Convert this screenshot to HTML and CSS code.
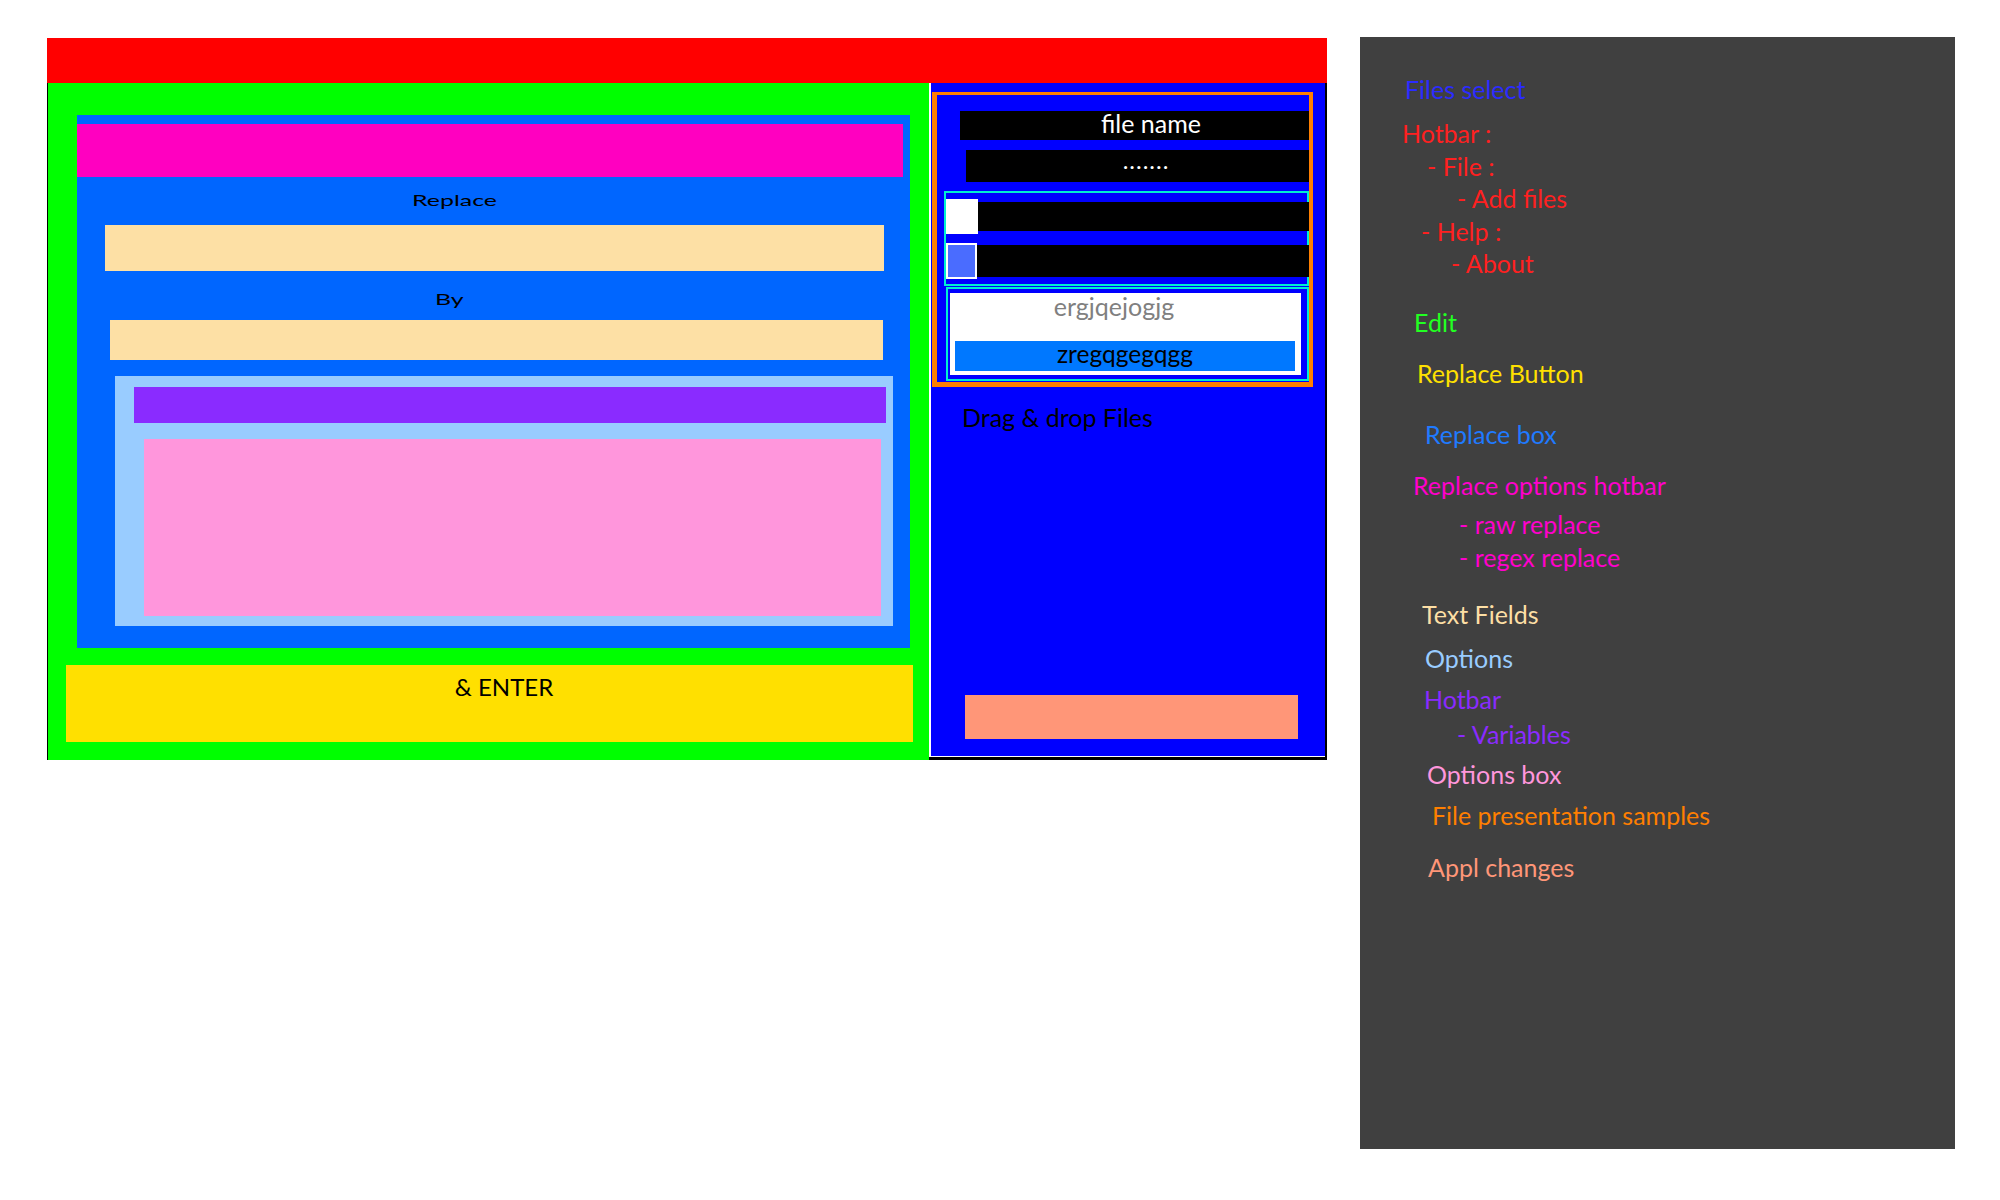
FILE: index.html
```html
<!DOCTYPE html>
<html lang="en">
<head>
<meta charset="utf-8">
<title>Mass Replace – layout mockup</title>
<link rel="stylesheet" href="styles.css">
</head>
<body>
<div class="page">
  <div class="app">
    <div class="menubar"></div>
    <div class="main">
      <section class="edit">
        <div class="replace-box">
          <div class="mode-bar"></div>
          <div class="field-label label-replace"><span>Replace</span></div>
          <div class="field field-find"></div>
          <div class="field-label label-by"><span>By</span></div>
          <div class="field field-by"></div>
          <div class="options">
            <div class="var-bar"></div>
            <div class="options-body"></div>
          </div>
        </div>
        <div class="enter-btn">&amp; ENTER</div>
      </section>
      <aside class="files">
        <div class="samples">
          <div class="bar bar-name">file name</div>
          <div class="bar bar-dots">.......</div>
          <div class="checks">
            <div class="check-row"><span class="box box-off"></span><span class="bar check-bar"></span></div>
            <div class="check-row"><span class="box box-on"></span><span class="bar check-bar check-bar-2"></span></div>
          </div>
          <div class="preview">
            <div class="preview-inner">
              <div class="preview-old">ergjqejogjg</div>
              <div class="preview-new">zregqgegqgg</div>
            </div>
          </div>
        </div>
        <div class="drop-hint">Drag &amp; drop Files</div>
        <div class="apply-btn"></div>
      </aside>
    </div>
  </div>
  <div class="legend">
    <p class="lg lg-files">Files select</p>
    <p class="lg c-menu lg-hotbar">Hotbar :</p>
    <p class="lg c-menu lg-file">- File :</p>
    <p class="lg c-menu lg-addfiles">- Add files</p>
    <p class="lg c-menu lg-help">- Help :</p>
    <p class="lg c-menu lg-about">- About</p>
    <p class="lg lg-edit">Edit</p>
    <p class="lg lg-button">Replace Button</p>
    <p class="lg lg-rbox">Replace box</p>
    <p class="lg c-mode lg-rhot">Replace options hotbar</p>
    <p class="lg c-mode lg-raw">- raw replace</p>
    <p class="lg c-mode lg-regex">- regex replace</p>
    <p class="lg lg-fields">Text Fields</p>
    <p class="lg lg-options">Options</p>
    <p class="lg c-vars lg-vhot">Hotbar</p>
    <p class="lg c-vars lg-vars">- Variables</p>
    <p class="lg lg-obox">Options box</p>
    <p class="lg lg-samples">File presentation samples</p>
    <p class="lg lg-apply">Appl changes</p>
  </div>
</div>
</body>
</html>
```

FILE: styles.css
```css
* { box-sizing: border-box; }

html, body {
  margin: 0;
  padding: 0;
  background: #ffffff;
}

body {
  font-family: Lato, "Open Sans", sans-serif;
  width: 2000px;
  height: 1200px;
  overflow: hidden;
}

.page {
  display: flex;
  align-items: flex-start;
  padding: 37px 0 0 47px;
}

/* ---------- application mockup ---------- */
.app {
  width: 1280px;
  margin-top: 1px;
}

.menubar {
  height: 45px;
  background: #ff0000;
}

.main {
  display: flex;
  height: 677px;
}

/* left: edit area */
.edit {
  width: 882px;
  background: #00ff00;
  border-left: 1px solid #000;
  display: flex;
  flex-direction: column;
}

.replace-box {
  margin: 32px 0 0 29px;
  width: 833px;
  height: 533px;
  background: #0066ff;
  padding-top: 9px;
  display: flex;
  flex-direction: column;
}

.mode-bar {
  width: 826px;
  height: 53px;
  background: #ff00c0;
  flex: none;
}

.field-label {
  flex: none;
  height: 48px;
  padding: 13px 0 0 335px;
  font-size: 15px;
  line-height: 20px;
  color: #000;
}

.field-label span {
  display: inline-block;
  transform: scaleX(1.66);
  transform-origin: left center;
}

.label-by {
  height: 49px;
  padding: 18px 0 0 358px;
}

.field {
  flex: none;
  background: #fde0a5;
}

.field-find {
  margin-left: 28px;
  width: 779px;
  height: 46px;
}

.field-by {
  margin-left: 33px;
  width: 773px;
  height: 40px;
}

.options {
  flex: none;
  margin: 16px 0 0 38px;
  width: 778px;
  height: 250px;
  background: #99ccff;
  padding-top: 11px;
}

.var-bar {
  margin-left: 19px;
  width: 752px;
  height: 36px;
  background: #8a2bff;
}

.options-body {
  margin: 16px 0 0 29px;
  width: 737px;
  height: 177px;
  background: #ff96dc;
}

.enter-btn {
  margin: 17px 0 0 18px;
  width: 847px;
  height: 77px;
  background: #ffe000;
  padding: 7px 0 0 29px;
  text-align: center;
  font-size: 24px;
  line-height: 30px;
  color: #000;
}

/* right: files area */
.files {
  width: 398px;
  background: #0000ff;
  border-right: 2px solid #000;
  border-bottom: 3px solid #000;
  box-shadow: inset 2px -1px 0 #ffffff;
  display: flex;
  flex-direction: column;
}

.samples {
  flex: none;
  margin: 9px 0 0 3px;
  width: 381px;
  height: 295px;
  border-style: solid;
  border-color: #ff7f00;
  border-width: 3px 4px 5px 5px;
}

.bar {
  background: #000;
  color: #fff;
}

.bar-name {
  margin: 16px 0 0 23px;
  height: 29px;
  padding-left: 33px;
  font-size: 25px;
  line-height: 24px;
  text-align: center;
}

.bar-dots {
  margin: 10px 0 0 29px;
  height: 32px;
  padding-left: 17px;
  font-size: 24px;
  line-height: 19px;
  letter-spacing: 1px;
  text-align: center;
}

.checks {
  margin: 9px 0 0 7px;
  height: 95px;
  border: 2px solid #00f0d0;
  padding-top: 6px;
}

.check-row {
  display: flex;
  align-items: center;
  margin-right: -2px;
}

.check-row + .check-row {
  margin-top: 9px;
}

.box { flex: none; }

.box-off {
  width: 32px;
  height: 35px;
  background: #ffffff;
}

.box-on {
  width: 31px;
  height: 36px;
  background: #4a6cff;
  border: 2px solid #ffffff;
}

.check-bar {
  flex: 1;
  height: 29px;
}

.check-bar-2 {
  height: 32px;
}

.preview {
  margin: 1px 0 0 9px;
  width: 363px;
  height: 94px;
  border: 2px solid #00f0d0;
  padding: 4px 6px 4px 2px;
}

.preview-inner {
  height: 100%;
  background: #ffffff;
  padding: 0 6px 4px 5px;
  display: flex;
  flex-direction: column;
}

.preview-old {
  height: 27px;
  padding-right: 22px;
  font-size: 25px;
  line-height: 26px;
  color: #808080;
  text-align: center;
}

.preview-new {
  margin-top: 21px;
  height: 30px;
  background: #0078ff;
  font-size: 24.5px;
  line-height: 25px;
  color: #000;
  text-align: center;
}

.drop-hint {
  margin: 15px 0 0 33px;
  font-size: 25px;
  line-height: 30px;
  color: #000;
}

.apply-btn {
  margin: auto 0 18px 36px;
  width: 333px;
  height: 44px;
  background: #ff9678;
}

/* ---------- legend ---------- */
.legend {
  margin-left: 33px;
  width: 595px;
  height: 1112px;
  background: #404040;
  padding-top: 37px;
  font-size: 25px;
  line-height: 30px;
}

.lg {
  margin: 0;
  white-space: pre;
}

.c-menu { color: #ff2020; }
.c-mode { color: #ff00cc; }
.c-vars { color: #8a2bff; }

.lg-files    { color: #2b2bff; margin-left: 45px; }
.lg-hotbar   { margin: 14px 0 0 42px; }
.lg-file     { margin: 3px 0 0 67px; }
.lg-addfiles { margin: 2px 0 0 97px; }
.lg-help     { margin: 3px 0 0 61px; }
.lg-about    { margin: 2px 0 0 91px; }
.lg-edit     { color: #22ff22; margin: 29px 0 0 54px; }
.lg-button   { color: #ffe000; margin: 21px 0 0 57px; }
.lg-rbox     { color: #1f7aff; margin: 31px 0 0 65px; }
.lg-rhot     { margin: 21px 0 0 53px; }
.lg-raw      { margin: 9px 0 0 99px; }
.lg-regex    { margin: 3px 0 0 99px; }
.lg-fields   { color: #fddfa5; margin: 27px 0 0 62px; }
.lg-options  { color: #99ccff; margin: 14px 0 0 65px; }
.lg-vhot     { margin: 11px 0 0 64px; }
.lg-vars     { margin: 5px 0 0 97px; }
.lg-obox     { color: #ff96dc; margin: 10px 0 0 67px; }
.lg-samples  { color: #ff7f00; margin: 11px 0 0 72px; }
.lg-apply    { color: #ff9678; margin: 22px 0 0 68px; }
```
